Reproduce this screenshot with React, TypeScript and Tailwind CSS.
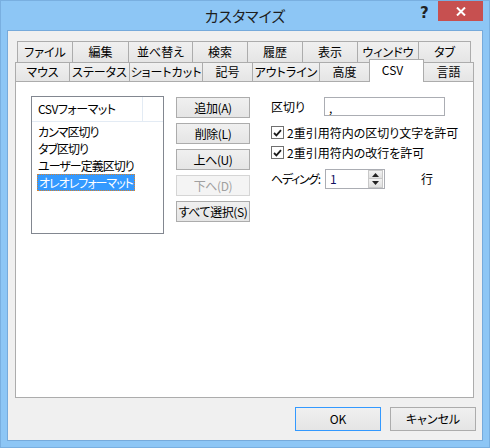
import clsx from 'clsx';

const ROW_BACK = [
  { label: 'ファイル', w: 'w-[56px]' },
  { label: '編集', w: 'w-[57px]' },
  { label: '並べ替え', w: 'w-[65px]' },
  { label: '検索', w: 'w-[56px]' },
  { label: '履歴', w: 'w-[56px]' },
  { label: '表示', w: 'w-[56px]' },
  { label: 'ウィンドウ', w: 'w-[62px]' },
  { label: 'タブ', w: 'w-[53px]' },
];

const ROW_FRONT = [
  { label: 'マウス', w: 'w-[55px]' },
  { label: 'ステータス', w: 'w-[61px]' },
  { label: 'ショートカット', w: 'w-[74px]' },
  { label: '記号', w: 'w-[51px]' },
  { label: 'アウトライン', w: 'w-[68px]' },
  { label: '高度', w: 'w-[51px]' },
  { label: 'CSV', w: 'w-[55px]', active: true },
  { label: '言語', w: 'w-[51px]' },
];

const FORMATS = ['カンマ区切り', 'タブ区切り', 'ユーザー定義区切り', 'オレオレフォーマット'];

const ACTIONS = [
  { label: '追加(A)' },
  { label: '削除(L)' },
  { label: '上へ(U)' },
  { label: '下へ(D)', disabled: true },
  { label: 'すべて選択(S)' },
];

function Button({ label, disabled, primary, className }: { label: string; disabled?: boolean; primary?: boolean; className?: string }) {
  return (
    <div
      className={clsx(
        'flex items-center justify-center border whitespace-nowrap',
        disabled
          ? 'border-[#d5d5d5] bg-[#f4f4f4] text-[#a0a0a0]'
          : 'bg-linear-to-b from-[#f0f0f0] to-[#e5e5e5] text-black',
        !disabled && (primary ? 'border-[#3399ff]' : 'border-[#acacac]'),
        className,
      )}
    >
      {label}
    </div>
  );
}

function CheckBox({ label }: { label: string }) {
  return (
    <div className="flex items-center h-[13px]">
      <span className="w-[13px] h-[13px] border border-[#707070] bg-white flex items-center justify-center">
        <svg width="9" height="8" viewBox="0 0 9 8">
          <path d="M1 4 L3.4 6.4 L8 1.2" fill="none" stroke="#1c1c1c" strokeWidth="1.8" />
        </svg>
      </span>
      <span className="ml-[3px] leading-none whitespace-nowrap">{label}</span>
    </div>
  );
}

export default function App() {
  return (
    <div className="w-[490px] h-[448px] bg-[#8dc6f5] border border-[#79afe0] flex flex-col text-[12px] text-black font-['Noto_Sans_CJK_JP',sans-serif] [font-feature-settings:'palt']">
      {/* caption */}
      <div className="relative h-[29px] shrink-0 flex items-center justify-center">
        <span className="text-[15px] text-[#1e1e1e] mt-[1px]">カスタマイズ</span>
        <span className="absolute left-[419px] top-[1px] text-[15px] font-bold text-[#222] font-['DejaVu_Sans',sans-serif]">?</span>
        <div className="absolute left-[437px] top-0 w-[45px] h-[20px] bg-[#c75050] flex items-center justify-center">
          <svg width="10" height="9" viewBox="0 0 10 9">
            <path d="M1 0.5 L9 8.5 M9 0.5 L1 8.5" stroke="#fff" strokeWidth="2" />
          </svg>
        </div>
      </div>

      {/* client area */}
      <div className="mx-[6px] w-[476px] h-[411px] border border-[#76aadb] bg-[#f0f0f0] flex flex-col">
        <div className="mt-[10px] flex flex-col">
          <div className="flex ml-[9px] h-[21px]">
            {ROW_BACK.map((t, i) => (
              <div
                key={t.label}
                className={clsx(
                  'h-[21px] flex items-center justify-center border border-b-0 border-[#acacac] bg-linear-to-b from-[#f0f0f0] to-[#e5e5e5] whitespace-nowrap',
                  t.w,
                  i > 0 && '-ml-px',
                )}
              >
                {t.label}
              </div>
            ))}
          </div>
          <div className="flex items-end ml-[7px] -mt-[3px]">
            {ROW_FRONT.map((t, i) => (
              <div
                key={t.label}
                className={clsx(
                  'flex items-center justify-center border border-b-0 border-[#acacac] whitespace-nowrap',
                  t.w,
                  i > 0 && '-ml-px',
                  t.active
                    ? 'relative z-10 h-[23px] -mb-px bg-white pr-[8px] pb-[3px]'
                    : 'h-[19px] bg-linear-to-b from-[#f0f0f0] to-[#e5e5e5]',
                )}
              >
                {t.label}
              </div>
            ))}
          </div>
        </div>

        {/* CSV page */}
        <div className="ml-[7px] w-[459px] h-[317px] border border-[#acacac] bg-white flex items-start pl-[15px] pt-[14px]">
          <div className="w-[133px] h-[138px] border border-[#828790] bg-white flex flex-col">
            <div className="h-[25px] flex border-b border-[#e3ebf4]">
              <div className="w-[111px] pl-[6px] flex items-center border-r border-[#e3ebf4] tracking-[-0.5px]">CSVフォーマット</div>
            </div>
            <div className="flex flex-col pt-[1px] tracking-[-1px]">
              {FORMATS.map((f, i) => (
                <div key={f} className="h-[17px] flex items-center pl-[5px] whitespace-nowrap">
                  {i === FORMATS.length - 1 ? (
                    <span className="h-[17px] px-[1px] flex items-center bg-[#3399ff] text-white border border-dotted border-[#d9822b] leading-none">
                      {f}
                    </span>
                  ) : (
                    <span className="pl-[1px]">{f}</span>
                  )}
                </div>
              ))}
            </div>
          </div>

          <div className="ml-[12px] mt-[1px] flex flex-col gap-[5px] tracking-[-0.4px]">
            {ACTIONS.map((a) => (
              <Button key={a.label} label={a.label} disabled={a.disabled} className="w-[74px] h-[21px]" />
            ))}
          </div>

          <div className="ml-[21px] mt-[1px] flex flex-col">
            <div className="flex items-center h-[19px]">
              <span className="w-[53px]">区切り</span>
              <div className="w-[121px] h-[19px] border border-[#abadb3] bg-white pl-[4px] flex items-end leading-[14px]">,</div>
            </div>
            <div className="mt-[10px]">
              <CheckBox label="2重引用符内の区切り文字を許可" />
            </div>
            <div className="mt-[7px]">
              <CheckBox label="2重引用符内の改行を許可" />
            </div>
            <div className="mt-[10px] flex items-center h-[20px]">
              <span className="w-[54px] whitespace-nowrap tracking-[-1.3px]">ヘディング:</span>
              <div className="w-[60px] h-[20px] border border-[#abadb3] bg-white flex items-center">
                <span className="flex-1 pl-[4px] text-[#101060]">1</span>
                <div className="w-[15px] h-[18px] mr-[1px] flex flex-col">
                  <div className="h-[9px] border border-[#c8c8c8] bg-linear-to-b from-[#f2f2f2] to-[#e0e0e0] flex items-center justify-center">
                    <svg width="7" height="4" viewBox="0 0 7 4"><path d="M3.5 0 L7 4 L0 4 Z" fill="#222" /></svg>
                  </div>
                  <div className="h-[9px] border border-t-0 border-[#c8c8c8] bg-linear-to-b from-[#f2f2f2] to-[#e0e0e0] flex items-center justify-center">
                    <svg width="7" height="4" viewBox="0 0 7 4"><path d="M0 0 L7 0 L3.5 4 Z" fill="#222" /></svg>
                  </div>
                </div>
              </div>
              <span className="ml-[36px]">行</span>
            </div>
          </div>
        </div>

        <div className="mt-[9px] flex justify-end pr-[6px] gap-[9px]">
          <Button label="OK" primary className="w-[86px] h-[24px]" />
          <Button label="キャンセル" className="w-[86px] h-[24px]" />
        </div>
      </div>
    </div>
  );
}
